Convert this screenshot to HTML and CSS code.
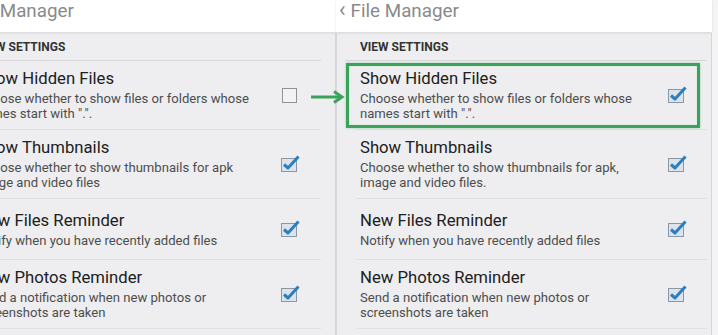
FILE: index.html
```html
<!DOCTYPE html>
<html>
<head>
<meta charset="utf-8">
<link rel="stylesheet" href="styles.css">
</head>
<body>
<div class="screen">
  <section class="panel panel-left">
    <header class="appbar"><span class="back">‹</span><span class="appbar-title">File Manager</span></header>
    <div class="content">
      <div class="group-title">VIEW SETTINGS</div>
      <div class="pref">
        <div class="pref-text">
          <div class="pref-title">Show Hidden Files</div>
          <div class="pref-desc">Choose whether to show files or folders whose names start with ".".</div>
        </div>
        <svg class="cb cb-off" viewBox="0 0 20 18" width="20" height="18"><rect x="2.5" y="2.5" width="14" height="14" fill="#f2f2f4" stroke="#8f9397" stroke-width="1"/></svg>
      </div>
      <div class="pref">
        <div class="pref-text">
          <div class="pref-title">Show Thumbnails</div>
          <div class="pref-desc">Choose whether to show thumbnails for apk image and video files</div>
        </div>
        <svg class="cb" viewBox="0 0 20 18" width="20" height="18"><rect x="1.5" y="3.5" width="15" height="13" fill="#dce3ea" stroke="#8a98a6" stroke-width="1"/><path d="M4 9.5 L8 13 L18.5 1.5" fill="none" stroke="#2b7fbf" stroke-width="3" stroke-linejoin="round"/></svg>
      </div>
      <div class="pref">
        <div class="pref-text">
          <div class="pref-title">New Files Reminder</div>
          <div class="pref-desc">Notify when you have recently added files</div>
        </div>
        <svg class="cb" viewBox="0 0 20 18" width="20" height="18"><rect x="1.5" y="3.5" width="15" height="13" fill="#dce3ea" stroke="#8a98a6" stroke-width="1"/><path d="M4 9.5 L8 13 L18.5 1.5" fill="none" stroke="#2b7fbf" stroke-width="3" stroke-linejoin="round"/></svg>
      </div>
      <div class="pref">
        <div class="pref-text">
          <div class="pref-title">New Photos Reminder</div>
          <div class="pref-desc">Send a notification when new photos or screenshots are taken</div>
        </div>
        <svg class="cb" viewBox="0 0 20 18" width="20" height="18"><rect x="1.5" y="3.5" width="15" height="13" fill="#dce3ea" stroke="#8a98a6" stroke-width="1"/><path d="M4 9.5 L8 13 L18.5 1.5" fill="none" stroke="#2b7fbf" stroke-width="3" stroke-linejoin="round"/></svg>
      </div>
    </div>
  </section>
  <section class="panel panel-right">
    <header class="appbar"><span class="back">‹</span><span class="appbar-title">File Manager</span></header>
    <div class="content">
      <div class="group-title">VIEW SETTINGS</div>
      <div class="pref pref-highlight">
        <div class="pref-text">
          <div class="pref-title">Show Hidden Files</div>
          <div class="pref-desc">Choose whether to show files or folders whose names start with ".".</div>
        </div>
        <svg class="cb" viewBox="0 0 20 18" width="20" height="18"><rect x="1.5" y="3.5" width="15" height="13" fill="#dce3ea" stroke="#8a98a6" stroke-width="1"/><path d="M4 9.5 L8 13 L18.5 1.5" fill="none" stroke="#2b7fbf" stroke-width="3" stroke-linejoin="round"/></svg>
      </div>
      <div class="pref">
        <div class="pref-text">
          <div class="pref-title">Show Thumbnails</div>
          <div class="pref-desc">Choose whether to show thumbnails for apk, image and video files.</div>
        </div>
        <svg class="cb" viewBox="0 0 20 18" width="20" height="18"><rect x="1.5" y="3.5" width="15" height="13" fill="#dce3ea" stroke="#8a98a6" stroke-width="1"/><path d="M4 9.5 L8 13 L18.5 1.5" fill="none" stroke="#2b7fbf" stroke-width="3" stroke-linejoin="round"/></svg>
      </div>
      <div class="pref">
        <div class="pref-text">
          <div class="pref-title">New Files Reminder</div>
          <div class="pref-desc">Notify when you have recently added files</div>
        </div>
        <svg class="cb" viewBox="0 0 20 18" width="20" height="18"><rect x="1.5" y="3.5" width="15" height="13" fill="#dce3ea" stroke="#8a98a6" stroke-width="1"/><path d="M4 9.5 L8 13 L18.5 1.5" fill="none" stroke="#2b7fbf" stroke-width="3" stroke-linejoin="round"/></svg>
      </div>
      <div class="pref">
        <div class="pref-text">
          <div class="pref-title">New Photos Reminder</div>
          <div class="pref-desc">Send a notification when new photos or screenshots are taken</div>
        </div>
        <svg class="cb" viewBox="0 0 20 18" width="20" height="18"><rect x="1.5" y="3.5" width="15" height="13" fill="#dce3ea" stroke="#8a98a6" stroke-width="1"/><path d="M4 9.5 L8 13 L18.5 1.5" fill="none" stroke="#2b7fbf" stroke-width="3" stroke-linejoin="round"/></svg>
      </div>
    </div>
  </section>
  <svg class="arrow" viewBox="0 0 36 14" width="36" height="14"><path d="M2 7 H31" stroke="#3aa35a" stroke-width="3" fill="none"/><path d="M25 1.5 L33 7 L25 12.5" stroke="#3aa35a" stroke-width="3" fill="none" stroke-linejoin="miter"/></svg>
</div>
</body>
</html>
```

FILE: styles.css
```css
html, body {
  margin: 0;
  padding: 0;
}
body {
  width: 718px;
  height: 335px;
  overflow: hidden;
  background: #f4f4f5;
  font-family: Roboto, "Liberation Sans", sans-serif;
}
.screen {
  position: relative;
  display: flex;
  width: 718px;
  height: 335px;
  overflow: hidden;
}
.panel {
  flex: none;
  display: flex;
  flex-direction: column;
}
.panel-left {
  width: 382px;
  margin-left: -46px;
}
.panel-right {
  width: 376px;
}
.appbar {
  height: 32px;
  background: #fff;
  display: flex;
  align-items: center;
  padding-left: 3px;
  color: #8a8a8a;
  font-size: 18.8px;
  box-shadow: 0 1px 2px rgba(0,0,0,0.12);
  position: relative;
  z-index: 1;
}
.panel-left .appbar {
  padding-left: 0;
}
.back {
  font-size: 22px;
  margin-right: 5px;
  line-height: 1;
  position: relative;
  top: -6px;
}
.appbar-title {
  position: relative;
  top: -5px;
}
.content {
  flex: 1;
  background: #eeeef0;
  border-left: 1px solid #d9d9db;
  border-right: 1px solid #d6d6d8;
  margin-top: 1px;
}
.panel-left .content {
  border-left: none;
}
.group-title {
  height: 27px;
  display: flex;
  align-items: center;
  margin: 0 4px 0 8px;
  padding-left: 15px;
  font-size: 12px;
  font-weight: bold;
  color: #333;
  border-bottom: 1px solid #d6d6d8;
}
.pref {
  position: relative;
  display: flex;
  align-items: center;
  box-sizing: border-box;
  min-height: 69px;
  margin: 0 4px 0 19px;
  padding: 8px 20px 8px 4px;
  border-bottom: 1px solid #e0e0e2;
}
.pref:nth-child(4) {
  min-height: 61px;
}
.panel-left .pref {
  margin-right: 14px;
  padding-right: 21px;
}
.panel-left .group-title {
  margin-right: 14px;
}
.pref-text {
  flex: 1;
}
.pref-title {
  font-size: 16.7px;
  line-height: 20px;
  color: #202020;
}
.pref-desc {
  font-size: 13.1px;
  line-height: 15px;
  margin-top: 2px;
  color: #4d4d4d;
  max-width: 292px;
}
.cb {
  flex: none;
  display: block;
}
.pref-highlight::after {
  content: "";
  position: absolute;
  top: 2px;
  bottom: 1px;
  left: -10px;
  right: 7px;
  border: 3px solid #3aa35a;
  box-shadow: 0 0 2px rgba(80,190,110,0.6), inset 0 0 1px rgba(80,190,110,0.6);
}
.arrow {
  position: absolute;
  left: 309px;
  top: 90px;
}
```
